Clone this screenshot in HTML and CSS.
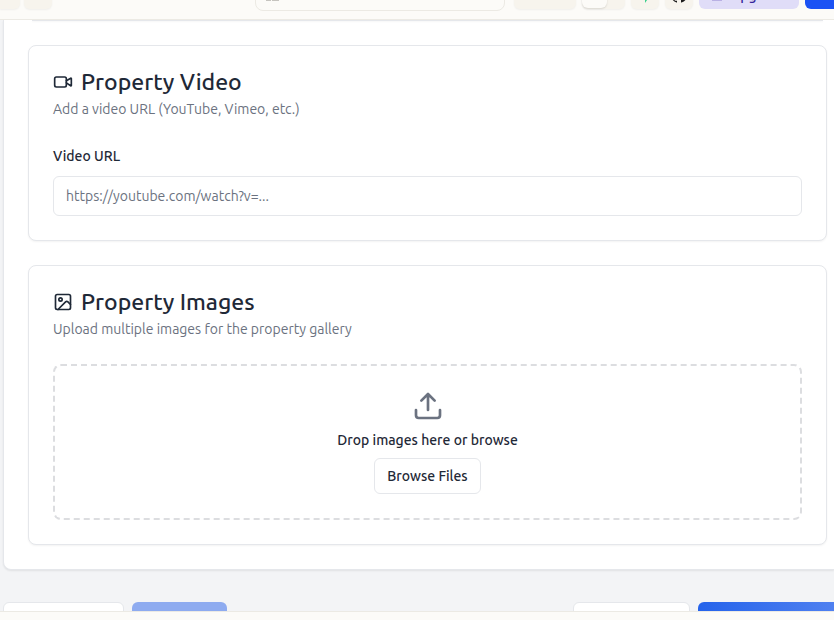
FILE: index.html
```html
<!DOCTYPE html>
<html lang="en">
<head>
<meta charset="utf-8">
<meta name="viewport" content="width=device-width, initial-scale=1">
<title>Property media</title>
<link rel="stylesheet" href="styles.css">
</head>
<body>
<header class="topbar">
  <div class="group group-start">
    <button class="chip chip-back" type="button" aria-label="Back"><svg viewBox="0 0 12 12" class="tick"><path d="M6 2v8"/></svg></button>
    <button class="chip" type="button" aria-label="Forward"></button>
  </div>
  <button class="address" type="button" aria-label="Page"><svg class="pages" viewBox="0 0 14 12"><path d="M0 0h5v12H0zM6 0h7v12H6z"/></svg></button>
  <div class="group group-end">
    <button class="chip chip-wide" type="button" aria-label="Device"></button>
    <button class="toggle" type="button" aria-label="Mode"><span class="knob"></span></button>
    <button class="chip" type="button" aria-label="Database"><svg class="bolt" viewBox="0 0 16 16"><path d="M8 1v5h7L8 16V9H2z"/></svg></button>
    <button class="chip" type="button" aria-label="Repository"><svg class="repo" viewBox="0 0 16 16"><path fill-rule="evenodd" d="M8 0C3.58 0 0 3.58 0 8c0 3.54 2.29 6.53 5.47 7.59.4.07.55-.17.55-.38 0-.19-.01-.82-.01-1.49-2.01.37-2.53-.49-2.69-.94-.09-.23-.48-.94-.82-1.13-.28-.15-.68-.52-.01-.53.63-.01 1.08.58 1.23.82.72 1.21 1.87.87 2.33.66.07-.52.28-.87.51-1.07-1.78-.2-3.64-.89-3.64-3.95 0-.87.31-1.59.82-2.15-.08-.2-.36-1.02.08-2.12 0 0 .67-.21 2.2.82a7.6 7.6 0 0 1 4 0c1.53-1.04 2.2-.82 2.2-.82.44 1.1.16 1.92.08 2.12.51.56.82 1.27.82 2.15 0 3.07-1.87 3.75-3.65 3.95.29.25.54.73.54 1.48 0 1.07-.01 1.93-.01 2.2 0 .21.15.46.55.38A8.01 8.01 0 0 0 16 8c0-4.42-3.58-8-8-8z"/></svg></button>
    <button class="upgrade" type="button"><span class="dash"></span>Upgrade</button>
    <button class="publish" type="button" aria-label="Publish"></button>
  </div>
</header>
<main class="content">
  <div class="panel">
    <div class="card card-previous"></div>
    <section class="card">
      <h2 class="title"><svg class="icon" viewBox="0 0 24 24"><path d="m16 13 5.223 3.482a.5.5 0 0 0 .777-.416V7.87a.5.5 0 0 0-.752-.432L16 10.5"/><rect x="2" y="6" width="14" height="12" rx="2"/></svg>Property Video</h2>
      <p class="subtitle">Add a video URL (YouTube, Vimeo, etc.)</p>
      <label class="label" for="video-url">Video URL</label>
      <input class="input" id="video-url" type="url" placeholder="https://youtube.com/watch?v=...">
    </section>
    <section class="card">
      <h2 class="title"><svg class="icon" viewBox="0 0 24 24"><rect x="3" y="3" width="18" height="18" rx="2"/><circle cx="9" cy="9" r="2"/><path d="m21 15-3.086-3.086a2 2 0 0 0-2.828 0L6 21"/></svg>Property Images</h2>
      <p class="subtitle">Upload multiple images for the property gallery</p>
      <div class="dropzone">
        <svg class="upload" viewBox="0 0 24 24"><path d="M21 15v4a2 2 0 0 1-2 2H5a2 2 0 0 1-2-2v-4M17 8l-5-5-5 5M12 3v12"/></svg>
        <p class="drop-text">Drop images here or browse</p>
        <button class="browse" type="button">Browse Files</button>
      </div>
    </section>
  </div>
  <div class="actions">
    <button class="action action-previous" type="button" aria-label="Previous"></button>
    <button class="action action-save" type="button" aria-label="Save"></button>
    <button class="action action-cancel" type="button" aria-label="Cancel"></button>
    <button class="action action-next" type="button" aria-label="Next"></button>
  </div>
</main>
<footer class="bottombar"></footer>
</body>
</html>
```
FILE: styles.css
```css
* { box-sizing: border-box; }
body {
  margin: 0;
  height: 100vh;
  display: flex;
  flex-direction: column;
  overflow: hidden;
  background: #f3f4f6;
  color: #1f2937;
  font-family: Ubuntu, Roboto, sans-serif;
  font-size: 14px;
  line-height: 20px;
}
h2, p { margin: 0; }
button { font: inherit; color: inherit; border: 0; padding: 0; }
svg { display: block; flex: none; }

.topbar {
  flex: none;
  height: 20px;
  display: flex;
  align-items: flex-end;
  justify-content: space-between;
  overflow: hidden;
  background: #fcfbf8;
  border-bottom: 1px solid #eceae4;
}
.group { display: flex; align-items: flex-end; gap: 6px; padding-bottom: 10px; }
.group-start { gap: 4px; width: 255px; }
.chip {
  flex: none;
  width: 28px;
  height: 28px;
  display: flex;
  align-items: center;
  justify-content: center;
  background: #f7f4ed;
  border-radius: 6px;
  box-shadow: 0 1px 2px rgba(0, 0, 0, .05);
}
.chip-back { width: 20px; border-radius: 0 6px 6px 0; }
.chip-wide { width: 62px; }
.tick { width: 12px; height: 12px; stroke: #a8a6a0; fill: none; }
.address {
  flex: 1;
  height: 32px;
  margin-bottom: 8px;
  padding-left: 10px;
  display: flex;
  align-items: center;
  background: #fcfbf8;
  border: 1px solid #eceae4;
  border-radius: 8px;
}
.pages { width: 14px; height: 12px; fill: #c6c4bf; }
.group-end { padding-left: 9px; }
.toggle { width: 43px; height: 28px; background: #f7f4ed; border-radius: 6px; box-shadow: 0 1px 2px rgba(0, 0, 0, .05); }
.knob { display: block; width: 25px; height: 26px; background: #fcfbf8; border-radius: 6px; box-shadow: 0 1px 2px rgba(0, 0, 0, .12); }
.bolt { width: 16px; height: 16px; fill: #3ecf8e; }
.repo { width: 16px; height: 16px; fill: #1c1c1c; }
.upgrade {
  width: 100px;
  height: 28px;
  display: flex;
  align-items: center;
  justify-content: center;
  gap: 8px;
  background: #e0ddf8;
  border-radius: 6px;
  color: #35249b;
  font-weight: 500;
}
.dash { width: 10px; height: 12px; background: #b9b1e4; }
.publish { width: 29px; height: 28px; background: #1b52f4; border-radius: 6px 0 0 6px; }

.content {
  flex: 1;
  min-height: 0;
  overflow: hidden;
  padding-left: 3px;
}
.panel {
  display: flex;
  flex-direction: column;
  gap: 24px;
  padding: 0 7px 24px 24px;
  background: #fff;
  border: 1px solid #e5e7eb;
  border-width: 0 0 1px 1px;
  border-radius: 0 0 0 8px;
  box-shadow: 0 1px 2px rgba(0, 0, 0, .08);
}
.card {
  display: flex;
  flex-direction: column;
  padding: 24px;
  background: #fff;
  border: 1px solid #e5e7eb;
  border-radius: 8px;
  box-shadow: 0 1px 2px rgba(0, 0, 0, .05);
}
.card-previous { height: 1px; margin: 0 4px; padding: 0; border-width: 0 0 1px; border-radius: 0; }
.title {
  display: flex;
  align-items: center;
  gap: 8px;
  font-size: 23px;
  line-height: 24px;
  font-weight: 500;
}
.icon {
  width: 20px;
  height: 20px;
  fill: none;
  stroke: currentColor;
  stroke-width: 2;
  stroke-linecap: round;
  stroke-linejoin: round;
}
.subtitle { margin: 5px 0 25px; color: #6b7280; }
.label { margin: 2px 0 10px; font-weight: 500; }
.input {
  width: 100%;
  height: 40px;
  padding: 0 12px;
  background: #fff;
  border: 1px solid #e5e7eb;
  border-radius: 6px;
  font: inherit;
  color: inherit;
}
.input::placeholder { color: #6b7280; opacity: 1; }
.dropzone {
  display: flex;
  flex-direction: column;
  align-items: center;
  padding: 24px;
  border: 2px dashed #dcdde0;
  border-radius: 8px;
}
.upload {
  width: 32px;
  height: 32px;
  fill: none;
  stroke: #6b7280;
  stroke-width: 2;
  stroke-linecap: round;
  stroke-linejoin: round;
}
.drop-text { margin: 8px 0; font-weight: 500; }
.browse {
  height: 36px;
  padding: 0 12px;
  background: #fff;
  border: 1px solid #e5e7eb;
  border-radius: 6px;
  font-weight: 500;
}
.actions { display: flex; gap: 8px; padding-top: 32px; }
.action { height: 40px; border-radius: 6px; }
.action-previous { width: 121px; background: #fff; border: 1px solid #e5e7eb; }
.action-save { width: 95px; background: #8eabf0; }
.action-cancel { width: 117px; margin-left: auto; background: #fff; border: 1px solid #e5e7eb; }
.action-next { width: 136px; border-radius: 6px 0 0 0; background: linear-gradient(90deg, #2563eb, #4f80f0); }
.bottombar { flex: none; height: 9px; background: #fcfbf8; border-top: 1px solid #eceae4; }
```
